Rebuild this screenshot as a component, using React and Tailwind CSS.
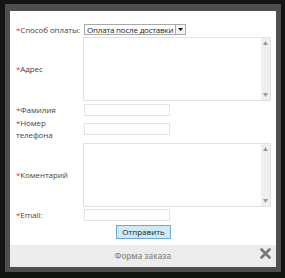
import React from "react";

function Label({ children, className = "" }) {
  return (
    <div className={"text-[8px] leading-[12px] tracking-[-0.1px] text-[#444] " + className}>
      <span className="text-[#d03a3a]">*</span>
      {children}
    </div>
  );
}

function FakeTextarea({ className = "" }) {
  return (
    <div className={"flex border border-[#e2e2e2] bg-white " + className}>
      <div className="flex-1" />
      <div className="w-[9px] bg-[#efefef] flex flex-col justify-between items-center py-[3px]">
        <svg width="5" height="4" viewBox="0 0 5 4"><path d="M0 4 L2.5 0 L5 4 Z" fill="#9a9a9a" /></svg>
        <svg width="5" height="4" viewBox="0 0 5 4"><path d="M0 0 L2.5 4 L5 0 Z" fill="#9a9a9a" /></svg>
      </div>
    </div>
  );
}

function Input() {
  return <div className="w-[86px] h-[12px] border border-[#e4e4e4] bg-white" />;
}

export default function App() {
  return (
    <div
      className="w-[285px] h-[278px] bg-[#121512] pt-[4px] pl-[5px] pr-[4px] pb-[6px]"
      style={{ fontFamily: '"Open Sans", "DejaVu Sans", sans-serif' }}
    >
      <div className="w-[276px] h-[268px] bg-[#4e4e4e] pt-[7px] px-[5px] pb-[5px] flex flex-col">
        <div className="bg-white h-[234px] pl-[6px] pt-[13px] flex flex-col">
          {/* Payment row */}
          <div className="flex items-center h-[11px]">
            <Label className="w-[68px]">Способ оплаты:</Label>
            <div className="flex items-center h-[11px] w-[102px] border border-[#a8a8a8] bg-white">
              <span className="flex-1 pl-[2px] text-[8px] leading-[9px] tracking-[-0.2px] text-[#222] whitespace-nowrap overflow-hidden">
                Оплата после доставки
              </span>
              <div className="w-[10px] h-[9px] border-l border-[#a8a8a8] bg-[#f4f4f4] flex items-center justify-center shrink-0">
                <svg width="5" height="3" viewBox="0 0 5 3"><path d="M0 0 L5 0 L2.5 3 Z" fill="#111" /></svg>
              </div>
            </div>
          </div>
          {/* Address */}
          <div className="flex items-center mt-[2px]">
            <Label className="w-[67px]">Адрес</Label>
            <FakeTextarea className="w-[188px] h-[64px]" />
          </div>
          {/* Surname */}
          <div className="flex items-center mt-[3px]">
            <Label className="w-[68px]">Фамилия</Label>
            <Input />
          </div>
          {/* Phone */}
          <div className="flex items-center mt-[1px]">
            <Label className="w-[68px]">
              Номер
              <br />
              телефона
            </Label>
            <Input />
          </div>
          {/* Comment */}
          <div className="flex items-center mt-[2px]">
            <Label className="w-[67px]">Коментарий</Label>
            <FakeTextarea className="w-[188px] h-[64px]" />
          </div>
          {/* Email */}
          <div className="flex items-center mt-[2px]">
            <Label className="w-[68px]">Email:</Label>
            <Input />
          </div>
          {/* Button */}
          <div className="flex mt-[4px] pl-[100px]">
            <div className="w-[55px] h-[14px] border border-[#6fa8d0] bg-[#cfe9f7] text-[8px] leading-[12px] font-medium text-[#222] flex items-center justify-center">
              Отправить
            </div>
          </div>
        </div>
        <div className="flex-1 bg-[#ececec] relative flex items-center justify-center">
          <span className="text-[8px] font-semibold text-[#8a8a8a]">Форма заказа</span>
          <svg className="absolute right-[5px] top-[3px]" width="11" height="11" viewBox="0 0 11 11">
            <path d="M1.5 1.5 L9.5 9.5 M9.5 1.5 L1.5 9.5" stroke="#777" strokeWidth="2.6" strokeLinecap="round" />
          </svg>
        </div>
      </div>
    </div>
  );
}
